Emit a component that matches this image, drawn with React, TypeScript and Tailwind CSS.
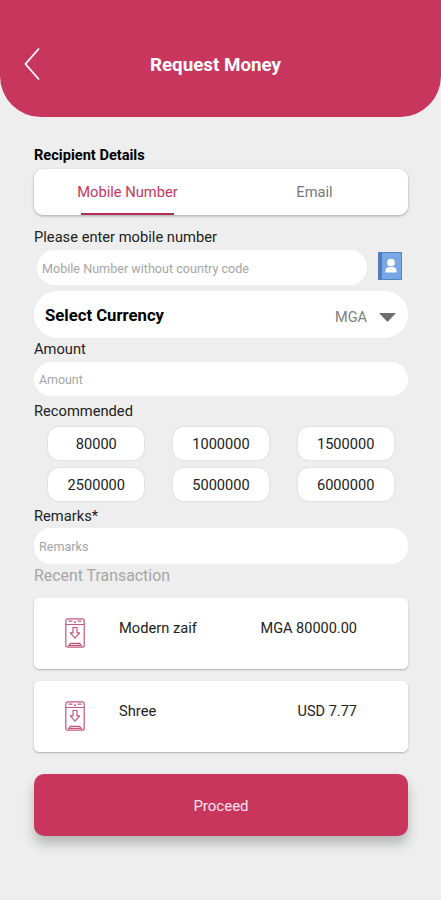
import { useState } from 'react';

const AMOUNTS = ['80000', '1000000', '1500000', '2500000', '5000000', '6000000'];

const TRANSACTIONS = [
  { id: 1, name: 'Modern zaif', amount: 'MGA 80000.00' },
  { id: 2, name: 'Shree', amount: 'USD 7.77' },
];

function PhoneDownIcon() {
  return (
    <svg width="20" height="30" viewBox="0 0 20 30" fill="none" stroke="#c4587c" strokeWidth="1.2">
      <rect x="0.8" y="0.8" width="18.4" height="28.4" rx="2" />
      <path d="M1 6.5h18M3.5 3.2h4M12.5 3.2h4" />
      <path d="M9 4.2h2" strokeWidth="1.6" />
      <path d="M8 9.5h4v5.3h2.7L10 20.2l-4.7-5.4H8z" strokeLinejoin="round" />
      <path d="M3.2 28.2l2.3-2.9h9l2.3 2.9M4.5 27.4h11" />
    </svg>
  );
}

function ContactIcon() {
  return (
    <svg width="24" height="28" viewBox="0 0 24 28">
      <rect x="0.5" y="0.5" width="23" height="27" fill="#79a7e6" stroke="#5583c4" />
      <rect x="0.5" y="0.5" width="3.5" height="27" fill="#4f7dbd" />
      <circle cx="13" cy="10.6" r="3.9" fill="#fff" />
      <path d="M7.5 20.5v-2.1c0-2 2.3-3.6 5.5-3.6s5.5 1.6 5.5 3.6v2.1z" fill="#fff" />
      <path d="M10.3 14.6h5.4" stroke="#79a7e6" strokeWidth="0.8" />
    </svg>
  );
}

export default function App() {
  const [tab, setTab] = useState('mobile');

  return (
    <div className="flex h-[900px] w-[441px] flex-col overflow-hidden bg-[#eeeeee] font-['Roboto',sans-serif] text-[#222]">
      {/* Header */}
      <header className="flex h-[117px] shrink-0 items-center rounded-b-[41px] bg-[#c8365e] pt-[11px] pl-6">
        <button aria-label="Back" className="text-white">
          <svg width="16" height="34" viewBox="0 0 16 34" fill="none" stroke="currentColor" strokeWidth="1.8">
            <path d="M15 1.5L1.5 17L15 32.5" />
          </svg>
        </button>
        <h1 className="flex-1 pt-[3px] pr-[50px] text-center text-[18.8px] font-bold text-white">Request Money</h1>
      </header>

      <main className="flex flex-col pr-[33px] pl-[34px] text-[14.7px]">
        <h2 className="mt-7 h-5 text-[14.6px] leading-5 font-bold text-black">Recipient Details</h2>

        {/* Tabs */}
        <div className="mt-1 flex h-[46px] rounded-[9px] bg-white shadow-[0_1px_3px_rgba(0,0,0,0.3)]">
          <button
            onClick={() => setTab('mobile')}
            className="flex flex-1 flex-col items-center justify-between text-[#c8365e]"
          >
            <span className="pt-3">Mobile Number</span>
            {tab === 'mobile' && <span className="h-[2.5px] w-[93px] bg-[#b32f56]" />}
          </button>
          <button
            onClick={() => setTab('email')}
            className="flex flex-1 flex-col items-center justify-between text-[#777]"
          >
            <span className="pt-3">Email</span>
            {tab === 'email' && <span className="h-[2.5px] w-[93px] bg-[#b32f56]" />}
          </button>
        </div>

        <label className="mt-3 h-5 leading-5">Please enter mobile number</label>
        <div className="mt-[3px] flex h-[35px] items-center justify-between pr-[6px] pl-[3px]">
          <input
            placeholder="Mobile Number without country code"
            className="h-[35px] w-[330px] rounded-full bg-white px-[5px] pt-px text-[12.6px] outline-none placeholder:text-[#a5a5a5]"
          />
          <div className="-mt-1">
            <ContactIcon />
          </div>
        </div>

        {/* Currency */}
        <div className="mt-[6px] flex h-[47px] items-center rounded-full bg-white pr-[12px] pl-[11px]">
          <span className="flex-1 pt-0.5 text-[16.7px] font-bold text-black">Select Currency</span>
          <span className="pt-[7px] text-[14.5px] text-[#808080]">MGA</span>
          <svg className="mt-[5px] ml-[12px]" width="17" height="9" viewBox="0 0 17 9" fill="#6f6f6f">
            <path d="M0 0h17L8.5 9z" />
          </svg>
        </div>

        <label className="mt-[1px] h-5 leading-5">Amount</label>
        <input
          placeholder="Amount"
          className="mt-[3px] h-[34px] rounded-full bg-white px-[5px] pt-px text-[12.4px] outline-none placeholder:text-[#a5a5a5]"
        />

        <p className="mt-[5px] h-5 leading-5">Recommended</p>
        <div className="mt-[6px] grid grid-cols-3 justify-items-center gap-y-2">
          {AMOUNTS.map((amount) => (
            <button
              key={amount}
              className="h-[33px] w-24 rounded-[11px] bg-white pt-0.5 text-[14.6px] shadow-[0_0_2px_rgba(0,0,0,0.16)]"
            >
              {amount}
            </button>
          ))}
        </div>

        <label className="mt-[5px] h-5 leading-5">Remarks*</label>
        <input
          placeholder="Remarks"
          className="mt-[2px] h-9 rounded-[17px] bg-white px-[5px] pt-px text-[12.6px] outline-none placeholder:text-[#a5a5a5]"
        />

        {/* Recent transactions */}
        <p className="mt-[2px] h-5 text-[15.9px] leading-5 text-[#a6a6a6]">Recent Transaction</p>
        <div className="mt-3 flex flex-col gap-3">
          {TRANSACTIONS.map((t) => (
            <div
              key={t.id}
              className="flex h-[71px] items-start rounded-[5px] bg-white pr-[51px] pl-[31px] shadow-[0_1px_2px_rgba(0,0,0,0.28)]"
            >
              <span className="mt-5">
                <PhoneDownIcon />
              </span>
              <span className="mt-[19px] ml-[34px] flex-1">{t.name}</span>
              <span className="mt-5 text-[14.5px]">{t.amount}</span>
            </div>
          ))}
        </div>

        <button className="mt-[22px] h-[62px] rounded-[10px] bg-[#c8365e] pt-0.5 text-[15px] text-[#fbe3ea] shadow-[0_8px_12px_rgba(60,75,65,0.32)]">
          Proceed
        </button>
      </main>
    </div>
  );
}
